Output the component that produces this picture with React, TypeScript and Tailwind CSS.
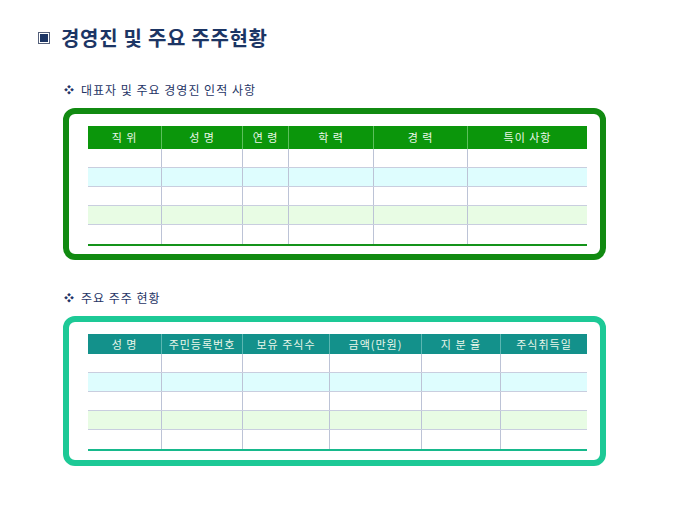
const execCols = ["직 위", "성 명", "연 령", "학 력", "경 력", "특이 사항"];
const holderCols = ["성 명", "주민등록번호", "보유 주식수", "금액(만원)", "지 분 율", "주식취득일"];

const rowBgs = ["bg-white", "bg-[#defdfe]", "bg-white", "bg-[#e8fce4]", "bg-white"];

function SubHeading({ text }: { text: string }) {
  return (
    <div className="flex items-center gap-[6px] pl-[64px] text-[12px] tracking-[1px] text-[#1f3566]">
      <span className="text-[10px] leading-none">❖</span>
      <span>{text}</span>
    </div>
  );
}

function Table({
  cols,
  grid,
  headBg,
  headLine,
  headH,
  bottomLine,
}: {
  cols: string[];
  grid: string;
  headBg: string;
  headLine: string;
  headH: string;
  bottomLine: string;
}) {
  return (
    <div className="w-[499px]">
      <div className={`grid ${grid} ${headBg} ${headH}`}>
        {cols.map((c, i) => (
          <div
            key={i}
            className={`flex items-center justify-center text-[11px] tracking-[1px] text-[#eaf7ea] ${i > 0 ? `border-l ${headLine}` : ""}`}
          >
            {c}
          </div>
        ))}
      </div>
      {rowBgs.map((bg, r) => (
        <div
          key={r}
          className={`grid ${grid} h-[19px] ${bg} ${r < 4 ? "border-b border-[#c9cedf]" : ""}`}
        >
          {cols.map((_, i) => (
            <div key={i} className={i > 0 ? "border-l border-[#bcc3d6]" : ""} />
          ))}
        </div>
      ))}
      <div className={`h-[2px] ${bottomLine}`} />
    </div>
  );
}

export default function App() {
  return (
    <div className="w-[680px] h-[510px] bg-white pt-[27px] font-['Noto_Sans_CJK_KR','Noto_Sans',sans-serif]">
      <div className="flex items-center gap-[11px] pl-[38px]">
        <div className="flex h-[12px] w-[12px] items-center justify-center border border-[#55607a] bg-white">
          <div className="h-[8px] w-[8px] bg-[#1c3564]" />
        </div>
        <h1 className="text-[20px] font-bold leading-[22px] tracking-[0.7px] text-[#1c3564]">경영진 및 주요 주주현황</h1>
      </div>

      <div className="mt-[32px]">
        <SubHeading text="대표자 및 주요 경영진 인적 사항" />
      </div>

      <div className="ml-[63px] mt-[9px] w-[543px] rounded-[12px] border-[6px] border-[#118a11] pl-[19px] pr-[13px] pt-[12px] pb-[8px]">
        <Table
          cols={execCols}
          grid="grid-cols-[73px_81px_46px_85px_94px_120px]"
          headBg="bg-[#0b960b]"
          headLine="border-[#5cc05c]"
          headH="h-[23px]"
          bottomLine="bg-[#14931a]"
        />
      </div>

      <div className="mt-[29px]">
        <SubHeading text="주요 주주 현황" />
      </div>

      <div className="ml-[63px] mt-[9px] w-[543px] rounded-[12px] border-[6px] border-[#1dc996] pl-[19px] pr-[13px] pt-[12px] pb-[9px]">
        <Table
          cols={holderCols}
          grid="grid-cols-[73px_81px_87px_92px_79px_87px]"
          headBg="bg-[#13918b]"
          headLine="border-[#5bb7b2]"
          headH="h-[20px]"
          bottomLine="bg-[#17b98c]"
        />
      </div>
    </div>
  );
}
